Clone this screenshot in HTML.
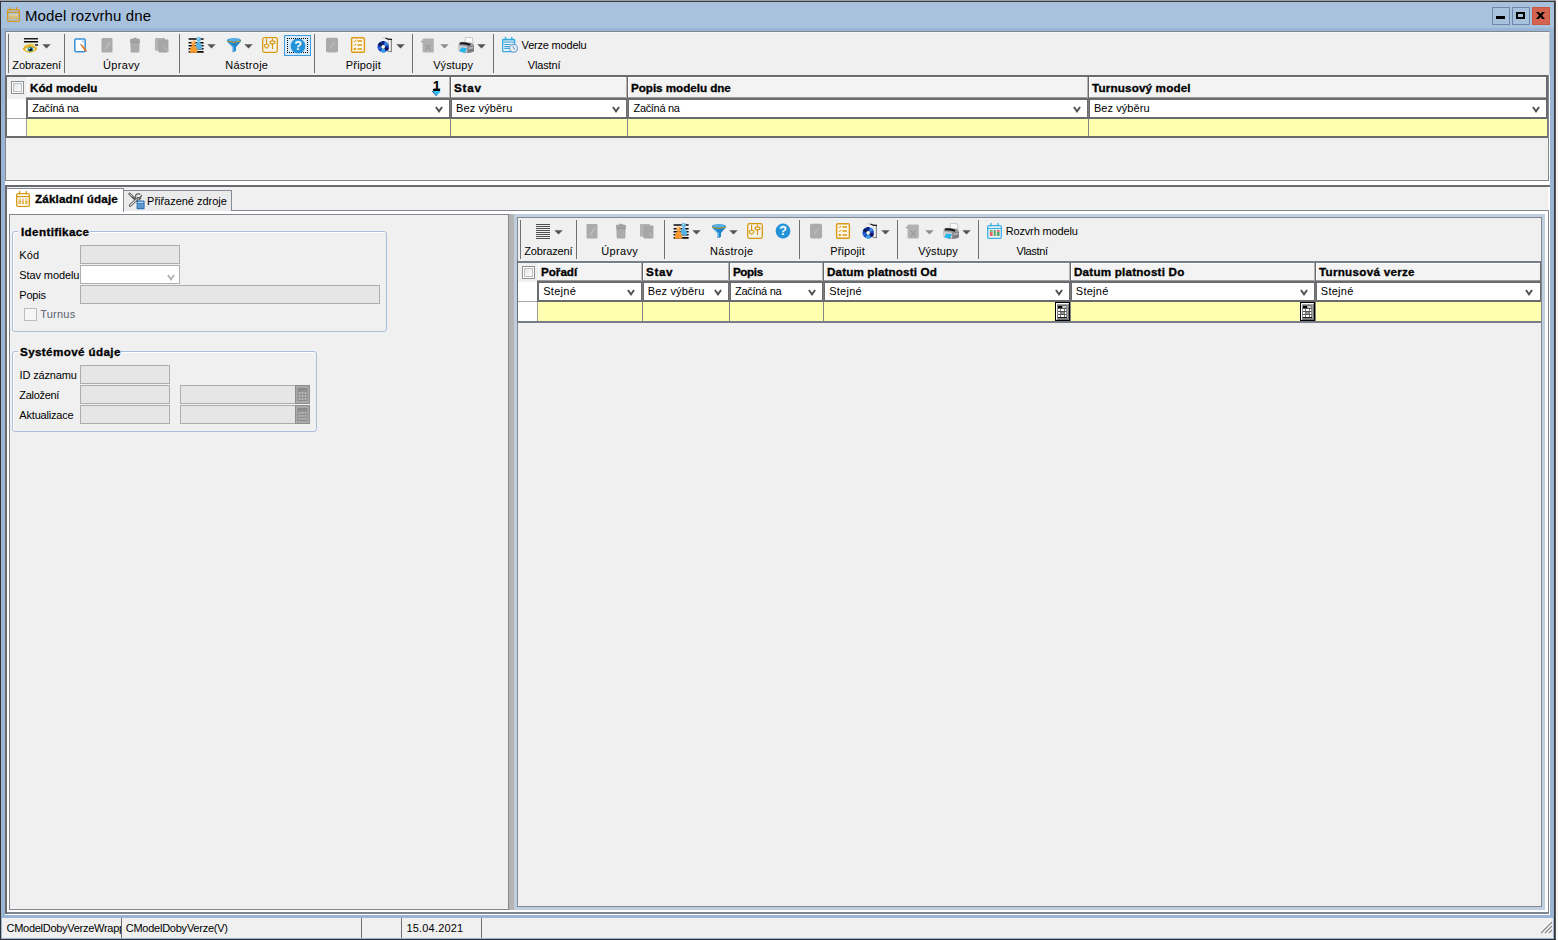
<!DOCTYPE html>
<html lang="cs"><head><meta charset="utf-8"><title>Model rozvrhu dne</title>
<style>
html,body{margin:0;padding:0}
body{width:1558px;height:940px;overflow:hidden;background:#f8f8f8;position:relative;font-family:"Liberation Sans",sans-serif;font-size:11px;color:#000}
div,span,svg{position:absolute;box-sizing:border-box}
svg{overflow:visible}
.t{white-space:nowrap;line-height:14px;height:14px}
.b{font-weight:bold;-webkit-text-stroke:0.3px #000;transform:scaleX(1.06);transform-origin:0 50%}
</style></head>
<body>
<div style="left:0px;top:0px;width:1556px;height:940px;background:#9ab5d4;"></div>
<div style="left:1px;top:2px;width:1553px;height:26px;background:#a8c2de;"></div>
<div style="left:0px;top:0px;width:1px;height:940px;background:#333;"></div>
<div style="left:1554px;top:0px;width:1px;height:940px;background:#383838;"></div>
<div style="left:1555px;top:0px;width:1px;height:940px;background:#5a5a5a;"></div>
<div style="left:0px;top:0px;width:1556px;height:1px;background:#9a9fa8;"></div>
<div style="left:0px;top:1px;width:1555px;height:1px;background:#3a3a3a;"></div>
<div style="left:0px;top:939px;width:1556px;height:1px;background:#303030;"></div>
<svg style="left:7px;top:7px" width="13" height="15" viewBox="0 0 14 16">
<rect x="0.7" y="2.7" width="12.6" height="12.6" rx="1.4" fill="none" stroke="#d8980f" stroke-width="1.3"/>
<path d="M3.6 0.5 V2.8 M10.4 0.5 V2.8" stroke="#d8980f" stroke-width="1.3" stroke-linecap="round"/>
<path d="M0.7 5.6 H13.3" stroke="#d8980f" stroke-width="1.2"/>
<rect x="2.6" y="7.4" width="2.4" height="5.6" fill="#efcf8a"/>
<rect x="6" y="7.4" width="2" height="5.6" fill="#efcf8a"/>
<rect x="9.1" y="7.4" width="2.4" height="5.6" fill="#efcf8a"/>
<path d="M2.4 10.6 H5.2 M5.9 10.6 H8.1 M9 10.6 H11.7 M2.4 12.4 H5.2 M5.9 12.4 H8.1 M9 12.4 H11.7" stroke="#dba62e" stroke-width="0.9"/>
</svg>
<span class="t ttl" style="left:25.0px;top:6px;font-size:15px;line-height:20px;height:20px;letter-spacing:0.113px;">Model rozvrhu dne</span>
<div style="left:1492px;top:7px;width:18px;height:18px;background:#a8c2de;border:1px solid #6f87a8;"></div>
<div style="left:1512px;top:7px;width:18px;height:18px;background:#a8c2de;border:1px solid #6f87a8;"></div>
<div style="left:1532px;top:7px;width:18px;height:18px;background:#d4644f;border:1px solid #c9573f;"></div>
<div style="left:1496px;top:16px;width:9px;height:3px;background:#000;"></div>
<div style="left:1516px;top:12px;width:9px;height:7px;border:2px solid #000;"></div>
<svg style="left:1536px;top:12px" width="9" height="7" viewBox="0 0 9 7"><path d="M0 0 H2.8 L4.5 2 L6.2 0 H9 L6 3.5 L9 7 H6.2 L4.5 5 L2.8 7 H0 L3 3.5Z" fill="#000"/></svg>
<div style="left:5px;top:31px;width:1545px;height:884px;background:#fff;"></div>
<div style="left:5px;top:31px;width:1545px;height:44px;background:#f0f0f0;border-top:1px solid #828790;border-left:1px solid #828790;border-right:1px solid #c4c8cc;"></div>
<div style="left:6px;top:32px;width:1543px;height:1px;background:#f7f7f7;"></div>
<div style="left:6px;top:32px;width:1px;height:43px;background:#f7f7f7;"></div>
<div style="left:5px;top:75px;width:1544px;height:106px;background:#f0f0f0;border:1px solid #828790;border-top:none;"></div>
<div style="left:8px;top:34px;width:1px;height:39px;background:#707070;"></div>
<div style="left:64px;top:34px;width:1px;height:39px;background:#707070;"></div>
<div style="left:179px;top:34px;width:1px;height:39px;background:#707070;"></div>
<div style="left:314px;top:34px;width:1px;height:39px;background:#707070;"></div>
<div style="left:412px;top:34px;width:1px;height:39px;background:#707070;"></div>
<div style="left:493px;top:34px;width:1px;height:39px;background:#707070;"></div>
<svg style="left:23px;top:37px" width="16" height="16" viewBox="0 0 16 16">
<rect x="0.9" y="0.9" width="14.2" height="1.7" rx="0.5" fill="#1c1c1c"/>
<rect x="0.9" y="3.9" width="14.2" height="1.7" rx="0.5" fill="#000"/>
<rect x="12.1" y="7.2" width="3" height="1.6" rx="0.4" fill="#111"/>
<g transform="translate(0,0.5)">
<path d="M0.5 11.8 Q6.6 6.2 13.6 11.4 Q7 17.2 0.5 11.8Z" fill="#fbfbf4"/>
<circle cx="7.4" cy="11.9" r="2.8" fill="#1b8fba"/>
<circle cx="7.5" cy="11.9" r="1.5" fill="#050a10"/>
<circle cx="6.7" cy="11" r="0.7" fill="#fff"/>
<path d="M0.5 11.8 Q6.6 17.6 13.6 11.4" fill="none" stroke="#e2b01e" stroke-width="1.3"/>
<path d="M0.4 11.8 Q6.4 5.6 13.7 11.3" fill="none" stroke="#e0ac18" stroke-width="2"/>
<path d="M1 9.2 Q5.6 5.2 11.6 7.4" fill="none" stroke="#ecc648" stroke-width="1.1"/>
</g>
</svg>
<svg style="left:41.5px;top:44px" width="9" height="5" viewBox="0 0 9 5"><path d="M0.3 0.2 H8.7 L4.5 4.6Z" fill="#555"/></svg>
<svg style="left:72px;top:37px" width="16" height="16" viewBox="0 0 16 16">
<rect x="2.8" y="1.9" width="10.4" height="12.9" rx="1.3" fill="#fff" stroke="#3a8fd2" stroke-width="1.5"/>
<path d="M10.4 2.6 V4.6 H12.6" fill="none" stroke="#8cc4ee" stroke-width="1"/>
<path d="M9 8.8 L10.3 7.7 L14.4 13 L13 14.3 Z" fill="#f0781a"/>
<path d="M13 14.3 L14.4 13 L14.8 14.6Z" fill="#a03a10"/>
<path d="M7.9 7 L10.3 7.7 L9 8.8Z" fill="#8a6a3a"/>
</svg>
<svg style="left:99px;top:37px" width="16" height="16" viewBox="0 0 16 16">
<rect x="2.5" y="1" width="11" height="14.5" rx="1" fill="#ababab"/>
<path d="M6 12 L11 5" stroke="#bdbdbd" stroke-width="1.6"/>
</svg>
<svg style="left:127px;top:37px" width="16" height="16" viewBox="0 0 16 16">
<rect x="6.2" y="0.8" width="3.6" height="2" rx="0.8" fill="#a4a4a4"/>
<rect x="3" y="1.8" width="10" height="3.2" rx="1.2" fill="#a2a2a2"/>
<path d="M3.4 4.6 H12.6 L12.3 14.6 Q12.3 15.5 11.4 15.5 H4.6 Q3.7 15.5 3.7 14.6Z" fill="#a6a6a6"/>
<path d="M3.2 5.3 H12.8" stroke="#969696" stroke-width="0.9"/>
<path d="M5.8 6.6 V14.4 M8 6.6 V14.4 M10.2 6.6 V14.4" stroke="#b2b2b2" stroke-width="0.9"/>
</svg>
<svg style="left:154px;top:37px" width="16" height="16" viewBox="0 0 16 16">
<rect x="1" y="1" width="10" height="12.8" rx="0.8" fill="#b3b3b3"/>
<rect x="4.4" y="2.4" width="10" height="13" rx="0.8" fill="#a6a6a6"/>
<path d="M10 10 L14.4 14.6" stroke="#b8b8b8" stroke-width="1.2"/>
</svg>
<svg style="left:188px;top:37px" width="16" height="16" viewBox="0 0 16 16">
<path d="M0.6 2 H15.6 M0.6 5.8 H15.6 M0.6 8.7 H15.6 M0.6 11.8 H15.6 M0.6 14.9 H15.6" stroke="#0a0a0a" stroke-width="1.6"/>
<circle cx="10.7" cy="2.3" r="2.3" fill="#5ab4e2"/>
<path d="M7.2 12 Q7.6 4.6 10.7 4.2 Q13.8 4.6 14.2 12Z" fill="#58b2e2"/>
<circle cx="10.2" cy="1.7" r="0.9" fill="#bfe2f6"/>
<circle cx="5.5" cy="5.7" r="2.3" fill="#fb9a30"/>
<path d="M1.6 15.7 Q2.2 8.2 5.5 7.8 Q8.8 8.2 9.4 15.7Z" fill="#fb9a30"/>
<circle cx="5" cy="5" r="0.9" fill="#fee0bd"/>
</svg>
<svg style="left:207px;top:44px" width="9" height="5" viewBox="0 0 9 5"><path d="M0.3 0.2 H8.7 L4.5 4.6Z" fill="#555"/></svg>
<svg style="left:225.6px;top:37px" width="16" height="16" viewBox="0 0 16 16">
<path d="M1 3.4 Q1 1.2 8 1.2 Q15 1.2 15 3.4 Q15 4.6 13.8 5.8 L10 10 V13.6 Q9.6 15 6.6 15.2 V10 L2.2 5.8 Q1 4.6 1 3.4Z" fill="#1f86cc"/>
<path d="M3.4 6.4 L7.4 10.2 V14.6" stroke="#5fb4ea" stroke-width="1.2" fill="none"/>
<ellipse cx="8" cy="3" rx="6.3" ry="1.5" fill="#58b0e6"/>
<path d="M1.4 4.2 Q8 6.6 14.6 4.2" stroke="#d29a1c" stroke-width="1" fill="none"/>
</svg>
<svg style="left:244px;top:44px" width="9" height="5" viewBox="0 0 9 5"><path d="M0.3 0.2 H8.7 L4.5 4.6Z" fill="#555"/></svg>
<svg style="left:262px;top:37px" width="16" height="16" viewBox="0 0 16 16">
<rect x="0.7" y="0.7" width="14.6" height="14.6" rx="1.8" fill="#f4f3ee" stroke="#d8980c" stroke-width="1.25"/>
<path d="M4.6 2.2 V8 M10.5 2 V11.4" stroke="#d8980c" stroke-width="1.2" stroke-linecap="round"/>
<path d="M2.2 8.6 Q2.2 7.2 4.6 7.2 Q7 7.2 7 8.6 Q7 9.6 4.6 11.4 Q2.2 9.6 2.2 8.6Z" fill="#f4f3ee" stroke="#d8980c" stroke-width="1.1"/>
<ellipse cx="10.5" cy="5.3" rx="2.5" ry="1.5" fill="#f4f3ee" stroke="#d8980c" stroke-width="1.2"/>
</svg>
<svg style="left:324px;top:37px" width="16" height="16" viewBox="0 0 16 16">
<rect x="2" y="0.8" width="12" height="14.6" rx="1.6" fill="#ababab"/>
<path d="M6 11 L11 5" stroke="#bababa" stroke-width="1.4"/>
</svg>
<svg style="left:350px;top:37px" width="16" height="16" viewBox="0 0 16 16">
<rect x="1.6" y="0.7" width="12.8" height="14.6" rx="1.2" fill="#fdf7ea" stroke="#dc9a12" stroke-width="1.4"/>
<path d="M7.4 4 H12 M7.4 8 H12 M7.4 12 H12" stroke="#dc9a12" stroke-width="1.4"/>
<path d="M3.6 3.8 L4.6 4.8 L6.2 2.8 M3.6 7.8 L4.6 8.8 L6.2 6.8" stroke="#dc9a12" stroke-width="1" fill="none"/>
<circle cx="4.8" cy="12" r="1.2" fill="#dc9a12"/>
</svg>
<svg style="left:377px;top:37px" width="16" height="16" viewBox="0 0 16 16">
<path d="M5.4 0.6 L14 1.6 Q15 1.8 15 3 V14 Q15 15 14 15 H9 V1.4Z" fill="#f8f8f8"/>
<rect x="10.8" y="2.6" width="4.2" height="12.4" fill="#d0d0d0"/>
<rect x="12" y="2.6" width="1.3" height="12.4" fill="#f4f4f4"/>
<rect x="14" y="2.6" width="1" height="12.4" fill="#8c8c8c"/>
<path d="M10.6 14.6 H15" stroke="#777" stroke-width="0.9"/>
<path d="M8.4 1 Q11 2.6 15 2.4" stroke="#111" stroke-width="1.3" fill="none"/>
<path d="M5.4 0.8 L8.4 1" stroke="#bbb" stroke-width="0.8"/>
<circle cx="6.2" cy="9.8" r="5.7" fill="#1746c0"/>
<path d="M6.2 9.8 L0.9 7.8 A5.7 5.7 0 0 1 3.4 4.9Z" fill="#05103c"/>
<path d="M6.2 9.8 L4.6 4.3 A5.7 5.7 0 0 1 7.2 4.2Z" fill="#0a1a70"/>
<path d="M6.2 9.8 L8.6 4.6 A5.7 5.7 0 0 1 11.4 7.4Z" fill="#3d86e0"/>
<path d="M6.2 9.8 L11.8 10.8 A5.7 5.7 0 0 1 10.2 13.9Z" fill="#120a50"/>
<path d="M6.2 9.8 L8.8 14.9 A5.7 5.7 0 0 1 3.4 14.8Z" fill="#38a0e0"/>
<path d="M6.2 9.8 L1.6 13.1 A5.7 5.7 0 0 1 0.6 10.6Z" fill="#2a66d8"/>
<circle cx="6.2" cy="9.8" r="1.9" fill="#e8d9a8"/>
<circle cx="6.2" cy="9.8" r="1.3" fill="#fff"/>
</svg>
<svg style="left:395.5px;top:44px" width="9" height="5" viewBox="0 0 9 5"><path d="M0.3 0.2 H8.7 L4.5 4.6Z" fill="#555"/></svg>
<svg style="left:420px;top:37px" width="16" height="16" viewBox="0 0 16 16">
<path d="M0.9 4.6 H3.4 M2.1 3.6 V5.6" stroke="#9a9a9a" stroke-width="1"/>
<rect x="2.6" y="1.4" width="11.2" height="14" rx="0.8" fill="#b1b1b1"/>
<path d="M5.6 7.4 L10.8 13.4 M10.8 7.4 L5.6 13.4" stroke="#9e9e9e" stroke-width="1.5"/>
</svg>
<svg style="left:439.5px;top:44px" width="9" height="5" viewBox="0 0 9 5"><path d="M0.3 0.2 H8.7 L4.5 4.6Z" fill="#8e8e8e"/></svg>
<svg style="left:458px;top:37px" width="16" height="16" viewBox="0 0 16 16">
<path d="M7.6 0.3 L14.4 0.8 L15.2 6 L6.8 5.4Z" fill="#fbfbfb" stroke="#b4b4b8" stroke-width="0.7"/>
<path d="M0.5 8 Q0.5 5.2 3 4.8 L13.4 6 Q16 6.4 16 9 V13 Q16 15 13.8 15.3 L6.6 16.2 L0.5 13.4Z" fill="#9c9ca0"/>
<path d="M0.7 8.2 L9.4 9.8 V15.8 L0.7 13.2Z" fill="#cdcdd0"/>
<path d="M9.4 9.8 L16 8.8 V13.2 Q16 15 13.8 15.3 L9.4 15.9Z" fill="#7c7c84"/>
<path d="M10.4 10.6 L15.2 9.8 V11.4 L10.4 12.2Z" fill="#b8b8bc"/>
<path d="M2.2 5.6 Q7 4.2 12.6 7 L11.8 8.8 Q7 6.6 1.8 7.4Z" fill="#151515"/>
<path d="M3.4 10.4 L9 11.2 L7 15.8 L1.2 14.4Z" fill="#27b6ec"/>
</svg>
<svg style="left:476.5px;top:44px" width="9" height="5" viewBox="0 0 9 5"><path d="M0.3 0.2 H8.7 L4.5 4.6Z" fill="#555"/></svg>
<svg style="left:502px;top:37px" width="16" height="16" viewBox="0 0 16 16">
<rect x="0.65" y="2.4" width="12" height="12.2" rx="0.9" fill="none" stroke="#35aae2" stroke-width="1.3"/>
<path d="M3.5 0.5 V2.6 M9.8 0.5 V2.6" stroke="#35aae2" stroke-width="1.4" stroke-linecap="round"/>
<rect x="0.65" y="2.2" width="12" height="1.4" fill="#35aae2"/>
<rect x="1.3" y="3.6" width="10.7" height="1" fill="#cfe6f6"/>
<rect x="0.65" y="4.6" width="12" height="1" fill="#35aae2"/>
<path d="M2.3 7.5 H8.4 M2.3 9.5 H7.6 M2.3 11.4 H7.6" stroke="#2fa6e0" stroke-width="1.1"/>
<circle cx="11.6" cy="11.3" r="3.9" fill="#f1f1f3" stroke="#6d9fd6" stroke-width="1.15"/>
<path d="M11.2 8.9 Q11 11.6 13.2 12.4" stroke="#6d9fd6" stroke-width="1.1" fill="none"/>
</svg>
<span class="t" style="left:12.28px;top:58px;letter-spacing:-0.1px;">Zobrazení</span>
<span class="t" style="left:103.1px;top:58px;letter-spacing:0.306px;">Úpravy</span>
<span class="t" style="left:225.19px;top:58px;letter-spacing:0.257px;">Nástroje</span>
<span class="t" style="left:345.78px;top:58px;letter-spacing:0.193px;">Připojit</span>
<span class="t" style="left:433.14px;top:58px;letter-spacing:0.12px;">Výstupy</span>
<span class="t" style="left:527.78px;top:58px;letter-spacing:-0.15px;">Vlastní</span>
<div style="left:284px;top:35px;width:27px;height:21px;background:#d9eafa;border:1px solid #3c9be0;"></div>
<div style="left:287px;top:38px;width:21px;height:15px;border:1px dotted #000;"></div>
<svg style="left:289.5px;top:37.5px" width="16" height="16" viewBox="0 0 16 16">
<circle cx="8" cy="8" r="7.4" fill="#2492d6"/>
<path d="M3 4 Q8 0.6 13 4 Q8 3 3 4Z" fill="#6fc0ee" opacity="0.7"/>
<text x="8" y="12.4" font-family="Liberation Sans, sans-serif" font-weight="bold" font-size="12.5" fill="#fff" text-anchor="middle">?</text>
</svg>
<span class="t" style="left:521.62px;top:38px;letter-spacing:-0.196px;">Verze modelu</span>
<div style="left:5px;top:75px;width:1543px;height:2px;background:#6a6b6e;"></div>
<div style="left:5px;top:75px;width:2px;height:63px;background:#6a6b6e;"></div>
<div style="left:7px;top:77px;width:1541px;height:21px;background:#f0f0f0;"></div>
<div style="left:7px;top:99px;width:19px;height:20px;background:#fff;"></div>
<div style="left:7px;top:119px;width:19px;height:17px;background:#fff;"></div>
<div style="left:7px;top:118px;width:19px;height:1px;background:#a5a5a5;"></div>
<div style="left:11px;top:81px;width:13px;height:13px;background:linear-gradient(135deg,#d8dce2 0%,#f4f5f7 60%,#fff 100%);border:1px solid #8e8f8f;box-shadow:inset 0 0 0 1px #fdfdfd, inset 0 0 0 2px #bcc0c5;"></div>
<div style="left:26px;top:97px;width:1522px;height:1px;background:#9a9a9a;"></div>
<div style="left:26px;top:98px;width:1522px;height:2px;background:#6a6b6e;"></div>
<div style="left:26px;top:100px;width:1522px;height:17px;background:#fff;"></div>
<div style="left:26px;top:117px;width:1522px;height:2px;background:#6a6b6e;"></div>
<div style="left:26px;top:119px;width:1522px;height:17px;background:#ffffb0;"></div>
<div style="left:26px;top:119px;width:1px;height:17px;background:#9a9a9a;"></div>
<div style="left:5px;top:136px;width:1543px;height:2px;background:#6a6b6e;"></div>
<div style="left:27px;top:77px;width:423px;height:1px;background:#fff;"></div>
<div style="left:27px;top:77px;width:1px;height:20px;background:#fff;"></div>
<div style="left:28px;top:78px;width:422px;height:19px;background:#f3f3f3;"></div>
<div style="left:26px;top:98px;width:2px;height:21px;background:#6a6b6e;"></div>
<div style="left:449px;top:77px;width:1px;height:21px;background:#b4b4b4;"></div>
<div style="left:450px;top:77px;width:1px;height:21px;background:#666;"></div>
<div style="left:449px;top:98px;width:3px;height:21px;background:#6a6b6e;"></div>
<div style="left:450px;top:100px;width:1px;height:17px;background:#7c7c7c;"></div>
<div style="left:450px;top:119px;width:1px;height:17px;background:#858585;"></div>
<span class="t b" style="left:29.5px;top:81px;">Kód modelu</span>
<span class="t" style="left:32.25px;top:101px;letter-spacing:-0.281px;">Začíná na</span>
<svg style="left:434.8px;top:106.4px" width="8" height="7" viewBox="0 0 8 7"><path d="M0.9 1.0 L4 5.4 L7.1 1.0" fill="none" stroke="#505050" stroke-width="1.9"/></svg>
<div style="left:451px;top:77px;width:176px;height:1px;background:#fff;"></div>
<div style="left:451px;top:77px;width:1px;height:20px;background:#fff;"></div>
<div style="left:452px;top:78px;width:175px;height:19px;background:#f3f3f3;"></div>
<div style="left:626px;top:77px;width:1px;height:21px;background:#b4b4b4;"></div>
<div style="left:627px;top:77px;width:1px;height:21px;background:#666;"></div>
<div style="left:626px;top:98px;width:3px;height:21px;background:#6a6b6e;"></div>
<div style="left:627px;top:100px;width:1px;height:17px;background:#7c7c7c;"></div>
<div style="left:627px;top:119px;width:1px;height:17px;background:#858585;"></div>
<span class="t b" style="left:453.76px;top:81px;letter-spacing:0.75px;">Stav</span>
<span class="t" style="left:456.06px;top:101px;letter-spacing:0.13px;">Bez výběru</span>
<svg style="left:611.8px;top:106.4px" width="8" height="7" viewBox="0 0 8 7"><path d="M0.9 1.0 L4 5.4 L7.1 1.0" fill="none" stroke="#505050" stroke-width="1.9"/></svg>
<div style="left:628px;top:77px;width:460px;height:1px;background:#fff;"></div>
<div style="left:628px;top:77px;width:1px;height:20px;background:#fff;"></div>
<div style="left:629px;top:78px;width:459px;height:19px;background:#f3f3f3;"></div>
<div style="left:1087px;top:77px;width:1px;height:21px;background:#b4b4b4;"></div>
<div style="left:1088px;top:77px;width:1px;height:21px;background:#666;"></div>
<div style="left:1087px;top:98px;width:3px;height:21px;background:#6a6b6e;"></div>
<div style="left:1088px;top:100px;width:1px;height:17px;background:#7c7c7c;"></div>
<div style="left:1088px;top:119px;width:1px;height:17px;background:#858585;"></div>
<span class="t b" style="left:631.12px;top:81px;letter-spacing:-0.036px;">Popis modelu dne</span>
<span class="t" style="left:633.51px;top:101px;letter-spacing:-0.326px;">Začíná na</span>
<svg style="left:1072.8px;top:106.4px" width="8" height="7" viewBox="0 0 8 7"><path d="M0.9 1.0 L4 5.4 L7.1 1.0" fill="none" stroke="#505050" stroke-width="1.9"/></svg>
<div style="left:1089px;top:77px;width:458px;height:1px;background:#fff;"></div>
<div style="left:1089px;top:77px;width:1px;height:20px;background:#fff;"></div>
<div style="left:1090px;top:78px;width:457px;height:19px;background:#f3f3f3;"></div>
<div style="left:1546px;top:77px;width:2px;height:42px;background:#6a6b6e;"></div>
<div style="left:1547px;top:119px;width:1px;height:17px;background:#7a7a7a;"></div>
<span class="t b" style="left:1092.3px;top:81px;letter-spacing:0.154px;">Turnusový model</span>
<span class="t" style="left:1093.88px;top:101px;letter-spacing:0.08px;">Bez výběru</span>
<svg style="left:1531.8px;top:106.4px" width="8" height="7" viewBox="0 0 8 7"><path d="M0.9 1.0 L4 5.4 L7.1 1.0" fill="none" stroke="#505050" stroke-width="1.9"/></svg>
<span class="t" style="left:433px;top:78px;font-size:13px;font-weight:bold;line-height:16px;height:16px;-webkit-text-stroke:0.2px #000">1</span>
<div style="left:433px;top:89px;width:7px;height:2px;background:#000;"></div>
<svg style="left:432px;top:91px" width="9" height="5" viewBox="0 0 9 5"><path d="M0 0 H9 L4.5 5Z" fill="#2bbcf0"/><path d="M0 0 L4.5 5" stroke="#1a3a9a" stroke-width="0.8"/></svg>
<div style="left:5px;top:185px;width:1545px;height:2px;background:#6a6b6e;"></div>
<div style="left:5px;top:187px;width:1543px;height:23px;background:#f0f0f0;"></div>
<div style="left:5px;top:210px;width:1544px;height:704px;background:#fff;border:1px solid #828790;border-left:2px solid #6a6b6e;border-bottom:2px solid #7d8390;"></div>
<div style="left:123px;top:190px;width:109px;height:21px;background:#ebebeb;border:1px solid #868b96;border-bottom:none;"></div>
<svg style="left:128px;top:192px" width="18" height="18" viewBox="0 0 18 18">
<path d="M1.6 1.8 L4.4 4.6 M4.4 4.6 L9 9" stroke="#5a5a5a" stroke-width="2.6" stroke-linecap="round"/>
<path d="M1.8 2 L4.2 4.4" stroke="#ececec" stroke-width="1" stroke-linecap="round"/>
<path d="M2.2 13.6 L8.6 7.4" stroke="#5a5a5a" stroke-width="2.8" stroke-linecap="round"/>
<path d="M2.4 13.4 L8.4 7.6" stroke="#ececec" stroke-width="1.1" stroke-linecap="round"/>
<path d="M11.6 2 Q7.4 1.2 7.6 5 M9.4 5.6 Q12.8 6.4 13.4 3.4 M12.6 6 L11 8" stroke="#5a5a5a" stroke-width="1.3" fill="none" stroke-linecap="round"/>
<rect x="8.6" y="8.6" width="8" height="8.6" rx="0.8" fill="#2f76ba"/>
<path d="M9.8 10.3 H15.4" stroke="#fff" stroke-width="0.9"/>
<rect x="9.8" y="11.8" width="5.6" height="4" fill="#7fb0de"/>
<path d="M11.2 11.8 V15.8 M12.6 11.8 V15.8 M14 11.8 V15.8" stroke="#2f76ba" stroke-width="0.6"/>
</svg>
<span class="t" style="left:147.1px;top:194px;letter-spacing:-0.024px;">Přiřazené zdroje</span>
<div style="left:7px;top:188px;width:117px;height:24px;background:#fff;border:1px solid #858a95;border-bottom:none;border-left:none;"></div>
<svg style="left:16px;top:191px" width="14" height="16" viewBox="0 0 14 16">
<rect x="0.7" y="2.7" width="12.6" height="12.6" rx="1.4" fill="none" stroke="#d8980f" stroke-width="1.3"/>
<path d="M3.6 0.5 V2.8 M10.4 0.5 V2.8" stroke="#d8980f" stroke-width="1.3" stroke-linecap="round"/>
<path d="M0.7 5.6 H13.3" stroke="#d8980f" stroke-width="1.2"/>
<rect x="2.6" y="7.4" width="2.4" height="5.6" fill="#efcf8a"/>
<rect x="6" y="7.4" width="2" height="5.6" fill="#efcf8a"/>
<rect x="9.1" y="7.4" width="2.4" height="5.6" fill="#efcf8a"/>
<path d="M2.4 10.6 H5.2 M5.9 10.6 H8.1 M9 10.6 H11.7 M2.4 12.4 H5.2 M5.9 12.4 H8.1 M9 12.4 H11.7" stroke="#dba62e" stroke-width="0.9"/>
</svg>
<span class="t b" style="left:35.01px;top:192px;letter-spacing:0.13px;">Základní údaje</span>
<div style="left:5px;top:185px;width:2px;height:729px;background:#6a6b6e;"></div>
<div style="left:9px;top:214px;width:500px;height:696px;background:#f0f0f0;border:1px solid #828790;"></div>
<div style="left:509px;top:214px;width:5px;height:696px;background:#b4b4b4;"></div>
<div style="left:514px;top:214px;width:1031px;height:696px;background:#bfcfdf;"></div>
<div style="left:517px;top:217px;width:1025px;height:690px;background:#f0f0f0;border:1px solid #828790;"></div>
<div style="left:12px;top:231px;width:375px;height:101px;border:1px solid #a9c0dc;border-radius:3px;box-shadow:inset 1px 1px 0 #fff;"></div>
<div style="left:18px;top:229px;width:72px;height:6px;background:#f0f0f0;"></div>
<span class="t b" style="left:20.5px;top:225px;letter-spacing:0.339px;">Identifikace</span>
<span class="t" style="left:19.3px;top:248px;letter-spacing:0.135px;">Kód</span>
<div style="left:80px;top:245px;width:100px;height:19px;background:#e6e6e6;border:1px solid #adadad;"></div>
<span class="t" style="left:19.3px;top:268px;letter-spacing:-0.106px;">Stav modelu</span>
<div style="left:80px;top:265px;width:100px;height:19px;background:#fff;border:1px solid #adadad;"></div>
<svg style="left:166.5px;top:273.8px" width="8" height="7" viewBox="0 0 8 7"><path d="M0.9 1.0 L4 5.4 L7.1 1.0" fill="none" stroke="#b4b4b4" stroke-width="1.9"/></svg>
<span class="t" style="left:19.3px;top:288px;letter-spacing:-0.225px;">Popis</span>
<div style="left:80px;top:285px;width:300px;height:19px;background:#e6e6e6;border:1px solid #adadad;"></div>
<div style="left:24px;top:308px;width:13px;height:13px;background:#f6f6f6;border:1px solid #bcbcbc;"></div>
<span class="t" style="left:40.2px;top:307px;color:#596272;letter-spacing:0.234px;">Turnus</span>
<div style="left:12px;top:351px;width:305px;height:81px;border:1px solid #a9c0dc;border-radius:3px;box-shadow:inset 1px 1px 0 #fff;"></div>
<div style="left:18px;top:349px;width:95px;height:6px;background:#f0f0f0;"></div>
<span class="t b" style="left:20.41px;top:345px;letter-spacing:0.347px;">Systémové údaje</span>
<span class="t" style="left:19.6px;top:368px;letter-spacing:-0.16px;">ID záznamu</span>
<div style="left:80px;top:365px;width:90px;height:19px;background:#e6e6e6;border:1px solid #adadad;"></div>
<span class="t" style="left:19.37px;top:388px;letter-spacing:-0.309px;">Založení</span>
<div style="left:80px;top:385px;width:90px;height:19px;background:#e6e6e6;border:1px solid #adadad;"></div>
<div style="left:180px;top:385px;width:130px;height:19px;background:#e6e6e6;border:1px solid #adadad;"></div>
<svg style="left:295px;top:385px" width="15" height="19" viewBox="0 0 15 19">
<rect x="0.5" y="0.5" width="14" height="18" fill="#a9a9a9" stroke="#8e8e8e" stroke-width="1"/>
<rect x="3" y="3.4" width="9" height="12" fill="#b8b8b8" stroke="#8a8a8a" stroke-width="1"/>
<path d="M3 6.4 H12 M3 9.4 H12 M3 12.4 H12 M6 6.4 V15.4 M9 6.4 V15.4" stroke="#8a8a8a" stroke-width="0.9"/>
<rect x="3" y="3.4" width="9" height="2.4" fill="#8a8a8a"/>
</svg>
<span class="t" style="left:19.37px;top:408px;letter-spacing:-0.207px;">Aktualizace</span>
<div style="left:80px;top:405px;width:90px;height:19px;background:#e6e6e6;border:1px solid #adadad;"></div>
<div style="left:180px;top:405px;width:130px;height:19px;background:#e6e6e6;border:1px solid #adadad;"></div>
<svg style="left:295px;top:405px" width="15" height="19" viewBox="0 0 15 19">
<rect x="0.5" y="0.5" width="14" height="18" fill="#a9a9a9" stroke="#8e8e8e" stroke-width="1"/>
<rect x="3" y="3.4" width="9" height="12" fill="#b8b8b8" stroke="#8a8a8a" stroke-width="1"/>
<path d="M3 6.4 H12 M3 9.4 H12 M3 12.4 H12 M6 6.4 V15.4 M9 6.4 V15.4" stroke="#8a8a8a" stroke-width="0.9"/>
<rect x="3" y="3.4" width="9" height="2.4" fill="#8a8a8a"/>
</svg>
<div style="left:520px;top:220px;width:1px;height:39px;background:#707070;"></div>
<div style="left:576px;top:220px;width:1px;height:39px;background:#707070;"></div>
<div style="left:664px;top:220px;width:1px;height:39px;background:#707070;"></div>
<div style="left:799px;top:220px;width:1px;height:39px;background:#707070;"></div>
<div style="left:897px;top:220px;width:1px;height:39px;background:#707070;"></div>
<div style="left:978px;top:220px;width:1px;height:39px;background:#707070;"></div>
<svg style="left:535px;top:223px" width="16" height="16" viewBox="0 0 16 16">
<g shape-rendering="crispEdges" fill="#4e4e4e">
<rect x="1" y="1" width="14" height="1"/><rect x="1" y="3" width="14" height="1"/><rect x="1" y="5" width="14" height="1"/><rect x="1" y="7" width="14" height="1"/>
<rect x="1" y="9" width="14" height="1"/><rect x="1" y="11" width="14" height="1"/><rect x="1" y="13" width="14" height="1"/><rect x="1" y="15" width="14" height="1"/></g>
</svg>
<svg style="left:553.5px;top:230px" width="9" height="5" viewBox="0 0 9 5"><path d="M0.3 0.2 H8.7 L4.5 4.6Z" fill="#555"/></svg>
<svg style="left:583.5px;top:223px" width="16" height="16" viewBox="0 0 16 16">
<rect x="2.5" y="1" width="11" height="14.5" rx="1" fill="#ababab"/>
<path d="M6 12 L11 5" stroke="#bdbdbd" stroke-width="1.6"/>
</svg>
<svg style="left:613px;top:223px" width="16" height="16" viewBox="0 0 16 16">
<rect x="6.2" y="0.8" width="3.6" height="2" rx="0.8" fill="#a4a4a4"/>
<rect x="3" y="1.8" width="10" height="3.2" rx="1.2" fill="#a2a2a2"/>
<path d="M3.4 4.6 H12.6 L12.3 14.6 Q12.3 15.5 11.4 15.5 H4.6 Q3.7 15.5 3.7 14.6Z" fill="#a6a6a6"/>
<path d="M3.2 5.3 H12.8" stroke="#969696" stroke-width="0.9"/>
<path d="M5.8 6.6 V14.4 M8 6.6 V14.4 M10.2 6.6 V14.4" stroke="#b2b2b2" stroke-width="0.9"/>
</svg>
<svg style="left:639px;top:223px" width="16" height="16" viewBox="0 0 16 16">
<rect x="1" y="1" width="10" height="12.8" rx="0.8" fill="#b3b3b3"/>
<rect x="4.4" y="2.4" width="10" height="13" rx="0.8" fill="#a6a6a6"/>
<path d="M10 10 L14.4 14.6" stroke="#b8b8b8" stroke-width="1.2"/>
</svg>
<svg style="left:673px;top:223px" width="16" height="16" viewBox="0 0 16 16">
<path d="M0.6 2 H15.6 M0.6 5.8 H15.6 M0.6 8.7 H15.6 M0.6 11.8 H15.6 M0.6 14.9 H15.6" stroke="#0a0a0a" stroke-width="1.6"/>
<circle cx="10.7" cy="2.3" r="2.3" fill="#5ab4e2"/>
<path d="M7.2 12 Q7.6 4.6 10.7 4.2 Q13.8 4.6 14.2 12Z" fill="#58b2e2"/>
<circle cx="10.2" cy="1.7" r="0.9" fill="#bfe2f6"/>
<circle cx="5.5" cy="5.7" r="2.3" fill="#fb9a30"/>
<path d="M1.6 15.7 Q2.2 8.2 5.5 7.8 Q8.8 8.2 9.4 15.7Z" fill="#fb9a30"/>
<circle cx="5" cy="5" r="0.9" fill="#fee0bd"/>
</svg>
<svg style="left:692px;top:230px" width="9" height="5" viewBox="0 0 9 5"><path d="M0.3 0.2 H8.7 L4.5 4.6Z" fill="#555"/></svg>
<svg style="left:710.6px;top:223px" width="16" height="16" viewBox="0 0 16 16">
<path d="M1 3.4 Q1 1.2 8 1.2 Q15 1.2 15 3.4 Q15 4.6 13.8 5.8 L10 10 V13.6 Q9.6 15 6.6 15.2 V10 L2.2 5.8 Q1 4.6 1 3.4Z" fill="#1f86cc"/>
<path d="M3.4 6.4 L7.4 10.2 V14.6" stroke="#5fb4ea" stroke-width="1.2" fill="none"/>
<ellipse cx="8" cy="3" rx="6.3" ry="1.5" fill="#58b0e6"/>
<path d="M1.4 4.2 Q8 6.6 14.6 4.2" stroke="#d29a1c" stroke-width="1" fill="none"/>
</svg>
<svg style="left:728.5px;top:230px" width="9" height="5" viewBox="0 0 9 5"><path d="M0.3 0.2 H8.7 L4.5 4.6Z" fill="#555"/></svg>
<svg style="left:746.5px;top:223px" width="16" height="16" viewBox="0 0 16 16">
<rect x="0.7" y="0.7" width="14.6" height="14.6" rx="1.8" fill="#f4f3ee" stroke="#d8980c" stroke-width="1.25"/>
<path d="M4.6 2.2 V8 M10.5 2 V11.4" stroke="#d8980c" stroke-width="1.2" stroke-linecap="round"/>
<path d="M2.2 8.6 Q2.2 7.2 4.6 7.2 Q7 7.2 7 8.6 Q7 9.6 4.6 11.4 Q2.2 9.6 2.2 8.6Z" fill="#f4f3ee" stroke="#d8980c" stroke-width="1.1"/>
<ellipse cx="10.5" cy="5.3" rx="2.5" ry="1.5" fill="#f4f3ee" stroke="#d8980c" stroke-width="1.2"/>
</svg>
<svg style="left:774.5px;top:223px" width="16" height="16" viewBox="0 0 16 16">
<circle cx="8" cy="8" r="7.4" fill="#2492d6"/>
<path d="M3 4 Q8 0.6 13 4 Q8 3 3 4Z" fill="#6fc0ee" opacity="0.7"/>
<text x="8" y="12.4" font-family="Liberation Sans, sans-serif" font-weight="bold" font-size="12.5" fill="#fff" text-anchor="middle">?</text>
</svg>
<svg style="left:808px;top:223px" width="16" height="16" viewBox="0 0 16 16">
<rect x="2" y="0.8" width="12" height="14.6" rx="1.6" fill="#ababab"/>
<path d="M6 11 L11 5" stroke="#bababa" stroke-width="1.4"/>
</svg>
<svg style="left:835px;top:223px" width="16" height="16" viewBox="0 0 16 16">
<rect x="1.6" y="0.7" width="12.8" height="14.6" rx="1.2" fill="#fdf7ea" stroke="#dc9a12" stroke-width="1.4"/>
<path d="M7.4 4 H12 M7.4 8 H12 M7.4 12 H12" stroke="#dc9a12" stroke-width="1.4"/>
<path d="M3.6 3.8 L4.6 4.8 L6.2 2.8 M3.6 7.8 L4.6 8.8 L6.2 6.8" stroke="#dc9a12" stroke-width="1" fill="none"/>
<circle cx="4.8" cy="12" r="1.2" fill="#dc9a12"/>
</svg>
<svg style="left:862px;top:223px" width="16" height="16" viewBox="0 0 16 16">
<path d="M5.4 0.6 L14 1.6 Q15 1.8 15 3 V14 Q15 15 14 15 H9 V1.4Z" fill="#f8f8f8"/>
<rect x="10.8" y="2.6" width="4.2" height="12.4" fill="#d0d0d0"/>
<rect x="12" y="2.6" width="1.3" height="12.4" fill="#f4f4f4"/>
<rect x="14" y="2.6" width="1" height="12.4" fill="#8c8c8c"/>
<path d="M10.6 14.6 H15" stroke="#777" stroke-width="0.9"/>
<path d="M8.4 1 Q11 2.6 15 2.4" stroke="#111" stroke-width="1.3" fill="none"/>
<path d="M5.4 0.8 L8.4 1" stroke="#bbb" stroke-width="0.8"/>
<circle cx="6.2" cy="9.8" r="5.7" fill="#1746c0"/>
<path d="M6.2 9.8 L0.9 7.8 A5.7 5.7 0 0 1 3.4 4.9Z" fill="#05103c"/>
<path d="M6.2 9.8 L4.6 4.3 A5.7 5.7 0 0 1 7.2 4.2Z" fill="#0a1a70"/>
<path d="M6.2 9.8 L8.6 4.6 A5.7 5.7 0 0 1 11.4 7.4Z" fill="#3d86e0"/>
<path d="M6.2 9.8 L11.8 10.8 A5.7 5.7 0 0 1 10.2 13.9Z" fill="#120a50"/>
<path d="M6.2 9.8 L8.8 14.9 A5.7 5.7 0 0 1 3.4 14.8Z" fill="#38a0e0"/>
<path d="M6.2 9.8 L1.6 13.1 A5.7 5.7 0 0 1 0.6 10.6Z" fill="#2a66d8"/>
<circle cx="6.2" cy="9.8" r="1.9" fill="#e8d9a8"/>
<circle cx="6.2" cy="9.8" r="1.3" fill="#fff"/>
</svg>
<svg style="left:881px;top:230px" width="9" height="5" viewBox="0 0 9 5"><path d="M0.3 0.2 H8.7 L4.5 4.6Z" fill="#555"/></svg>
<svg style="left:904.5px;top:223px" width="16" height="16" viewBox="0 0 16 16">
<path d="M0.9 4.6 H3.4 M2.1 3.6 V5.6" stroke="#9a9a9a" stroke-width="1"/>
<rect x="2.6" y="1.4" width="11.2" height="14" rx="0.8" fill="#b1b1b1"/>
<path d="M5.6 7.4 L10.8 13.4 M10.8 7.4 L5.6 13.4" stroke="#9e9e9e" stroke-width="1.5"/>
</svg>
<svg style="left:925px;top:230px" width="9" height="5" viewBox="0 0 9 5"><path d="M0.3 0.2 H8.7 L4.5 4.6Z" fill="#8e8e8e"/></svg>
<svg style="left:942.5px;top:223px" width="16" height="16" viewBox="0 0 16 16">
<path d="M7.6 0.3 L14.4 0.8 L15.2 6 L6.8 5.4Z" fill="#fbfbfb" stroke="#b4b4b8" stroke-width="0.7"/>
<path d="M0.5 8 Q0.5 5.2 3 4.8 L13.4 6 Q16 6.4 16 9 V13 Q16 15 13.8 15.3 L6.6 16.2 L0.5 13.4Z" fill="#9c9ca0"/>
<path d="M0.7 8.2 L9.4 9.8 V15.8 L0.7 13.2Z" fill="#cdcdd0"/>
<path d="M9.4 9.8 L16 8.8 V13.2 Q16 15 13.8 15.3 L9.4 15.9Z" fill="#7c7c84"/>
<path d="M10.4 10.6 L15.2 9.8 V11.4 L10.4 12.2Z" fill="#b8b8bc"/>
<path d="M2.2 5.6 Q7 4.2 12.6 7 L11.8 8.8 Q7 6.6 1.8 7.4Z" fill="#151515"/>
<path d="M3.4 10.4 L9 11.2 L7 15.8 L1.2 14.4Z" fill="#27b6ec"/>
</svg>
<svg style="left:961.5px;top:230px" width="9" height="5" viewBox="0 0 9 5"><path d="M0.3 0.2 H8.7 L4.5 4.6Z" fill="#555"/></svg>
<svg style="left:987px;top:223px" width="15" height="16" viewBox="0 0 15 16">
<rect x="0.7" y="2.7" width="13.6" height="12.6" rx="1.2" fill="#f2f4f5" stroke="#3eb0e4" stroke-width="1.3"/>
<path d="M4 0.5 V2.8 M11 0.5 V2.8" stroke="#3eb0e4" stroke-width="1.4" stroke-linecap="round"/>
<path d="M0.7 5.5 H14.3" stroke="#3eb0e4" stroke-width="1.2"/>
<rect x="2.8" y="7" width="2.8" height="1.8" fill="#63ad74"/><rect x="2.8" y="9" width="2.8" height="4" fill="#e06868"/>
<rect x="6.6" y="7" width="2.2" height="6" fill="#63ad74"/>
<rect x="9.8" y="7" width="2.8" height="1.8" fill="#e06868"/><rect x="9.8" y="9" width="2.8" height="4" fill="#55a868"/>
</svg>
<span class="t" style="left:524.14px;top:244px;letter-spacing:-0.145px;">Zobrazení</span>
<span class="t" style="left:601.28px;top:244px;letter-spacing:0.342px;">Úpravy</span>
<span class="t" style="left:709.92px;top:244px;letter-spacing:0.334px;">Nástroje</span>
<span class="t" style="left:830.28px;top:244px;letter-spacing:0.116px;">Připojit</span>
<span class="t" style="left:918.14px;top:244px;letter-spacing:0.075px;">Výstupy</span>
<span class="t" style="left:1016.54px;top:244px;letter-spacing:-0.36px;">Vlastní</span>
<span class="t" style="left:1005.64px;top:224px;letter-spacing:-0.143px;">Rozvrh modelu</span>
<div style="left:517px;top:261px;width:1024px;height:2px;background:#777d89;"></div>
<div style="left:517px;top:261px;width:1px;height:62px;background:#6a6b6e;"></div>
<div style="left:518px;top:263px;width:1023px;height:18px;background:#f0f0f0;"></div>
<div style="left:518px;top:282px;width:19px;height:20px;background:#fff;"></div>
<div style="left:518px;top:302px;width:19px;height:19px;background:#fff;"></div>
<div style="left:518px;top:301px;width:19px;height:1px;background:#a5a5a5;"></div>
<div style="left:522px;top:266px;width:13px;height:13px;background:linear-gradient(135deg,#d8dce2 0%,#f4f5f7 60%,#fff 100%);border:1px solid #8e8f8f;box-shadow:inset 0 0 0 1px #fdfdfd, inset 0 0 0 2px #bcc0c5;"></div>
<div style="left:537px;top:280px;width:1004px;height:1px;background:#9a9a9a;"></div>
<div style="left:537px;top:281px;width:1004px;height:2px;background:#6a6b6e;"></div>
<div style="left:537px;top:283px;width:1004px;height:17px;background:#fff;"></div>
<div style="left:537px;top:300px;width:1004px;height:2px;background:#6a6b6e;"></div>
<div style="left:537px;top:302px;width:1004px;height:19px;background:#ffffb0;"></div>
<div style="left:537px;top:302px;width:1px;height:19px;background:#9a9a9a;"></div>
<div style="left:517px;top:321px;width:1024px;height:2px;background:#777d89;"></div>
<div style="left:538px;top:263px;width:104px;height:1px;background:#fff;"></div>
<div style="left:538px;top:263px;width:1px;height:17px;background:#fff;"></div>
<div style="left:539px;top:264px;width:103px;height:16px;background:#f3f3f3;"></div>
<div style="left:537px;top:281px;width:2px;height:21px;background:#6a6b6e;"></div>
<div style="left:641px;top:263px;width:1px;height:18px;background:#b4b4b4;"></div>
<div style="left:642px;top:263px;width:1px;height:18px;background:#666;"></div>
<div style="left:641px;top:281px;width:3px;height:21px;background:#6a6b6e;"></div>
<div style="left:642px;top:283px;width:1px;height:17px;background:#7c7c7c;"></div>
<div style="left:642px;top:302px;width:1px;height:19px;background:#858585;"></div>
<span class="t b" style="left:540.59px;top:265px;letter-spacing:-0.018px;">Pořadí</span>
<span class="t" style="left:543.25px;top:284px;letter-spacing:0.27px;">Stejné</span>
<svg style="left:626.8px;top:289.4px" width="8" height="7" viewBox="0 0 8 7"><path d="M0.9 1.0 L4 5.4 L7.1 1.0" fill="none" stroke="#505050" stroke-width="1.9"/></svg>
<div style="left:643px;top:263px;width:86px;height:1px;background:#fff;"></div>
<div style="left:643px;top:263px;width:1px;height:17px;background:#fff;"></div>
<div style="left:644px;top:264px;width:85px;height:16px;background:#f3f3f3;"></div>
<div style="left:728px;top:263px;width:1px;height:18px;background:#b4b4b4;"></div>
<div style="left:729px;top:263px;width:1px;height:18px;background:#666;"></div>
<div style="left:728px;top:281px;width:3px;height:21px;background:#6a6b6e;"></div>
<div style="left:729px;top:283px;width:1px;height:17px;background:#7c7c7c;"></div>
<div style="left:729px;top:302px;width:1px;height:19px;background:#858585;"></div>
<span class="t b" style="left:645.58px;top:265px;letter-spacing:0.6px;">Stav</span>
<span class="t" style="left:647.7px;top:284px;letter-spacing:0.18px;">Bez výběru</span>
<svg style="left:713.8px;top:289.4px" width="8" height="7" viewBox="0 0 8 7"><path d="M0.9 1.0 L4 5.4 L7.1 1.0" fill="none" stroke="#505050" stroke-width="1.9"/></svg>
<div style="left:730px;top:263px;width:93px;height:1px;background:#fff;"></div>
<div style="left:730px;top:263px;width:1px;height:17px;background:#fff;"></div>
<div style="left:731px;top:264px;width:92px;height:16px;background:#f3f3f3;"></div>
<div style="left:822px;top:263px;width:1px;height:18px;background:#b4b4b4;"></div>
<div style="left:823px;top:263px;width:1px;height:18px;background:#666;"></div>
<div style="left:822px;top:281px;width:3px;height:21px;background:#6a6b6e;"></div>
<div style="left:823px;top:283px;width:1px;height:17px;background:#7c7c7c;"></div>
<div style="left:823px;top:302px;width:1px;height:19px;background:#858585;"></div>
<span class="t b" style="left:732.94px;top:265px;letter-spacing:-0.382px;">Popis</span>
<span class="t" style="left:735.06px;top:284px;letter-spacing:-0.293px;">Začíná na</span>
<svg style="left:807.8px;top:289.4px" width="8" height="7" viewBox="0 0 8 7"><path d="M0.9 1.0 L4 5.4 L7.1 1.0" fill="none" stroke="#505050" stroke-width="1.9"/></svg>
<div style="left:824px;top:263px;width:246px;height:1px;background:#fff;"></div>
<div style="left:824px;top:263px;width:1px;height:17px;background:#fff;"></div>
<div style="left:825px;top:264px;width:245px;height:16px;background:#f3f3f3;"></div>
<div style="left:1069px;top:263px;width:1px;height:18px;background:#b4b4b4;"></div>
<div style="left:1070px;top:263px;width:1px;height:18px;background:#666;"></div>
<div style="left:1069px;top:281px;width:3px;height:21px;background:#6a6b6e;"></div>
<div style="left:1070px;top:283px;width:1px;height:17px;background:#7c7c7c;"></div>
<div style="left:1070px;top:302px;width:1px;height:19px;background:#858585;"></div>
<span class="t b" style="left:826.76px;top:265px;letter-spacing:0.127px;">Datum platnosti Od</span>
<span class="t" style="left:829.15px;top:284px;letter-spacing:0.27px;">Stejné</span>
<svg style="left:1054.8px;top:289.4px" width="8" height="7" viewBox="0 0 8 7"><path d="M0.9 1.0 L4 5.4 L7.1 1.0" fill="none" stroke="#505050" stroke-width="1.9"/></svg>
<svg style="left:1055px;top:302px" width="15" height="19" viewBox="0 0 15 19">
<rect x="0.5" y="0.5" width="14" height="18" fill="#a4a4a4" stroke="#000" stroke-width="1"/>
<path d="M1.5 17.5 V1.5 H13.5" stroke="#fff" stroke-width="1" fill="none"/>
<path d="M13.5 2.5 V17.5 H2.5" stroke="#6e6e6e" stroke-width="1" fill="none"/>
<rect x="2.6" y="3.4" width="9" height="12.4" fill="#555"/>
<rect x="3" y="4" width="4" height="2" fill="#000"/><rect x="7.4" y="4" width="3.8" height="2" fill="#c8c8c8"/>
<g fill="#fff"><rect x="3" y="7" width="2.2" height="2"/><rect x="6" y="7" width="3" height="2"/><rect x="9.8" y="7" width="1.4" height="2"/>
<rect x="3" y="10" width="2.2" height="2"/><rect x="6.4" y="10.3" width="2.2" height="1.4" fill="#c8c8c8"/><rect x="9.8" y="10" width="1.4" height="2"/>
<rect x="3" y="13" width="2.2" height="2"/><rect x="6" y="13" width="3" height="2"/><rect x="9.8" y="13" width="1.4" height="2"/></g>
<rect x="2.6" y="15.2" width="9.4" height="1" fill="#000"/>
</svg>
<div style="left:1071px;top:263px;width:244px;height:1px;background:#fff;"></div>
<div style="left:1071px;top:263px;width:1px;height:17px;background:#fff;"></div>
<div style="left:1072px;top:264px;width:243px;height:16px;background:#f3f3f3;"></div>
<div style="left:1314px;top:263px;width:1px;height:18px;background:#b4b4b4;"></div>
<div style="left:1315px;top:263px;width:1px;height:18px;background:#666;"></div>
<div style="left:1314px;top:281px;width:3px;height:21px;background:#6a6b6e;"></div>
<div style="left:1315px;top:283px;width:1px;height:17px;background:#7c7c7c;"></div>
<div style="left:1315px;top:302px;width:1px;height:19px;background:#858585;"></div>
<span class="t b" style="left:1073.76px;top:265px;letter-spacing:0.191px;">Datum platnosti Do</span>
<span class="t" style="left:1075.79px;top:284px;letter-spacing:0.27px;">Stejné</span>
<svg style="left:1299.8px;top:289.4px" width="8" height="7" viewBox="0 0 8 7"><path d="M0.9 1.0 L4 5.4 L7.1 1.0" fill="none" stroke="#505050" stroke-width="1.9"/></svg>
<svg style="left:1300px;top:302px" width="15" height="19" viewBox="0 0 15 19">
<rect x="0.5" y="0.5" width="14" height="18" fill="#a4a4a4" stroke="#000" stroke-width="1"/>
<path d="M1.5 17.5 V1.5 H13.5" stroke="#fff" stroke-width="1" fill="none"/>
<path d="M13.5 2.5 V17.5 H2.5" stroke="#6e6e6e" stroke-width="1" fill="none"/>
<rect x="2.6" y="3.4" width="9" height="12.4" fill="#555"/>
<rect x="3" y="4" width="4" height="2" fill="#000"/><rect x="7.4" y="4" width="3.8" height="2" fill="#c8c8c8"/>
<g fill="#fff"><rect x="3" y="7" width="2.2" height="2"/><rect x="6" y="7" width="3" height="2"/><rect x="9.8" y="7" width="1.4" height="2"/>
<rect x="3" y="10" width="2.2" height="2"/><rect x="6.4" y="10.3" width="2.2" height="1.4" fill="#c8c8c8"/><rect x="9.8" y="10" width="1.4" height="2"/>
<rect x="3" y="13" width="2.2" height="2"/><rect x="6" y="13" width="3" height="2"/><rect x="9.8" y="13" width="1.4" height="2"/></g>
<rect x="2.6" y="15.2" width="9.4" height="1" fill="#000"/>
</svg>
<div style="left:1316px;top:263px;width:224px;height:1px;background:#fff;"></div>
<div style="left:1316px;top:263px;width:1px;height:17px;background:#fff;"></div>
<div style="left:1317px;top:264px;width:223px;height:16px;background:#f3f3f3;"></div>
<div style="left:1540px;top:263px;width:1px;height:39px;background:#6a6b6e;"></div>
<span class="t b" style="left:1319.39px;top:265px;letter-spacing:0.251px;">Turnusová verze</span>
<span class="t" style="left:1320.79px;top:284px;letter-spacing:0.27px;">Stejné</span>
<svg style="left:1524.8px;top:289.4px" width="8" height="7" viewBox="0 0 8 7"><path d="M0.9 1.0 L4 5.4 L7.1 1.0" fill="none" stroke="#505050" stroke-width="1.9"/></svg>
<div style="left:2px;top:918px;width:1551px;height:20px;background:#f0f0f0;"></div>
<div style="left:121px;top:918px;width:1px;height:20px;background:#6e6e6e;"></div>
<div style="left:361px;top:918px;width:1px;height:20px;background:#6e6e6e;"></div>
<div style="left:401px;top:918px;width:1px;height:20px;background:#6e6e6e;"></div>
<div style="left:481px;top:918px;width:1px;height:20px;background:#6e6e6e;"></div>
<span class="t" style="left:6.5px;top:921px;letter-spacing:-0.28px;width:114px;overflow:hidden;">CModelDobyVerzeWrapper</span>
<span class="t" style="left:125.74px;top:921px;letter-spacing:-0.244px;">CModelDobyVerze(V)</span>
<span class="t" style="left:406.47px;top:921px;letter-spacing:0.18px;">15.04.2021</span>
<svg style="left:1540px;top:921px" width="13" height="13" viewBox="0 0 13 13"><path d="M1 12 L12 1 M5 12 L12 5 M9 12 L12 9" stroke="#8a8a8a" stroke-width="1.3"/><path d="M0 12 L11 1 M4 12 L11 5 M8 12 L11 9" stroke="#fff" stroke-width="1" transform="translate(0,-1)"/></svg>
</body></html>
